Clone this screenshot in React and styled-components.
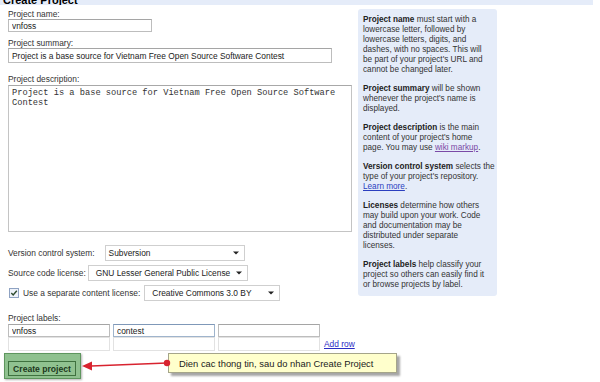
import React from 'react';
import styled, { createGlobalStyle } from 'styled-components';

const Global = createGlobalStyle`
  html, body { margin: 0; padding: 0; background: #fff; }
  body {
    font-family: "Liberation Sans", Arial, sans-serif;
    color: #333;
    width: 600px;
    height: 382px;
    overflow: hidden;
  }
`;

const Header = styled.div`
  width: 593px;
  height: 5px;
  background: #e5ecf9;
  overflow: hidden;
  padding-left: 3px;
  box-sizing: border-box;
`;

const Title = styled.h1`
  margin: -5px 0 0;
  font-size: 11px;
  line-height: 11px;
  font-weight: bold;
  color: #000;
`;

const Layout = styled.div`
  display: flex;
  align-items: flex-start;
  gap: 2px;
  padding: 4px 0 0 8px;
`;

const FormColumn = styled.div`
  width: 348px;
  display: flex;
  flex-direction: column;
`;

const Label = styled.div`
  font-size: 8.4px;
  line-height: 10px;
  color: #333;
  white-space: nowrap;
`;

const TextInput = styled.input`
  box-sizing: border-box;
  width: ${(p) => p.$w}px;
  height: ${(p) => p.$h || 14}px;
  margin: 0 0 ${(p) => p.$mb || 0}px;
  padding: 0 3px;
  border: 1px solid ${(p) => p.$border || '#bdbdbd'};
  border-top-color: ${(p) => p.$borderTop || '#a5a5a5'};
  background: #fff;
  font-family: "Liberation Sans", Arial, sans-serif;
  font-size: 8.4px;
  color: #222;
  outline: none;
`;

const DescArea = styled.textarea`
  box-sizing: border-box;
  width: 344px;
  height: 147px;
  margin: 1px 0 13px;
  padding: 2px 3px;
  border: 1px solid #c4c4c4;
  border-top-color: #a8a8a8;
  font-family: "Liberation Mono", "Courier New", monospace;
  font-size: 8.7px;
  line-height: 10px;
  color: #333;
  resize: none;
  overflow: hidden;
  outline: none;
`;

const OptionRow = styled.div`
  display: flex;
  align-items: center;
  gap: ${(p) => p.$gap}px;
  height: 16px;
  margin-bottom: ${(p) => p.$mb || 4}px;
`;

const Select = styled.div`
  box-sizing: border-box;
  width: ${(p) => p.$w}px;
  height: 16px;
  border: 1px solid #cfcfcf;
  background: #fff;
  display: flex;
  align-items: center;
  justify-content: space-between;
  padding: 0 5px 0 ${(p) => p.$pl || 5}px;
  font-size: 8.4px;
  color: #222;
  white-space: nowrap;
`;

const CheckBox = styled.span`
  display: inline-flex;
  width: 10px;
  height: 10px;
  margin-left: 1px;
`;

const LabelsRow = styled.div`
  display: flex;
  align-items: center;
  gap: 4px;
  margin-top: 1px;
`;

const LabelGrid = styled.div`
  display: grid;
  grid-template-columns: repeat(3, 102px);
  grid-template-rows: 13px 14px;
  column-gap: 3px;
`;

const AddRow = styled.a`
  align-self: flex-end;
  margin-bottom: 2px;
  font-size: 8.4px;
  line-height: 10px;
  color: #2b2bc4;
  text-decoration: underline;
  white-space: nowrap;
`;

const ActionRow = styled.div`
  position: relative;
  margin-top: 10px;
  display: flex;
`;

const Highlight = styled.div`
  position: absolute;
  left: -4px;
  top: -8px;
  width: 77px;
  height: 26px;
  box-sizing: border-box;
  background: #8fc18f;
  border: 1px solid #5e965e;
  box-shadow: 1px 1px 2px rgba(0, 0, 0, 0.3);
`;

const CreateButton = styled.button`
  position: relative;
  box-sizing: border-box;
  width: 68px;
  height: 15px;
  padding: 0;
  background: #90c290;
  border: 1px solid #3f713f;
  font-family: "Liberation Sans", Arial, sans-serif;
  font-size: 8.6px;
  font-weight: bold;
  color: #1c381c;
`;

const Callout = styled.div`
  position: absolute;
  left: 160px;
  top: -8px;
  width: 229px;
  height: 20px;
  box-sizing: border-box;
  background: #ffffcc;
  border: 1px solid #a5a58a;
  box-shadow: 3px 3px 2px rgba(0, 0, 0, 0.35);
  padding-left: 10px;
  display: flex;
  align-items: center;
  font-size: 9.4px;
  color: #222;
  white-space: nowrap;
`;

const Pointer = styled.svg`
  position: absolute;
  left: 72px;
  top: -8px;
  overflow: visible;
`;

const Panel = styled.div`
  width: 139px;
  box-sizing: border-box;
  background: #e5ecf9;
  border-radius: 3px;
  padding: 6px 2px 6px 5px;
  font-size: 8.2px;
  line-height: 10px;
  color: #333;
  white-space: nowrap;
`;

const Tip = styled.p`
  margin: 0 0 9px;
  &:last-child { margin-bottom: 0; }
  b { color: #222; }
`;

const Link = styled.a`
  color: ${(p) => (p.$visited ? '#7a4aa6' : '#2b3fbf')};
  text-decoration: underline;
`;

const Arrow = () => (
  <svg width="6" height="4" viewBox="0 0 6 4">
    <path d="M0 0.5 L6 0.5 L3 3.5 Z" fill="#222" />
  </svg>
);

export default function App() {
  return (
    <>
      <Global />
      <Header>
        <Title>Create Project</Title>
      </Header>
      <Layout>
        <FormColumn>
          <Label>Project name:</Label>
          <TextInput $w={144} $h={13} $mb={6} readOnly value="vnfoss" />
          <Label>Project summary:</Label>
          <TextInput
            $w={324}
            $h={15}
            $mb={11}
            readOnly
            value="Project is a base source for Vietnam Free Open Source Software Contest"
          />
          <Label>Project description:</Label>
          <DescArea
            readOnly
            value="Project is a base source for Vietnam Free Open Source Software Contest"
          />
          <OptionRow $gap={10}>
            <Label>Version control system:</Label>
            <Select $w={140} $pl={3}>
              Subversion <Arrow />
            </Select>
          </OptionRow>
          <OptionRow $gap={2}>
            <Label>Source code license:</Label>
            <Select $w={160} $pl={7}>
              GNU Lesser General Public License <Arrow />
            </Select>
          </OptionRow>
          <OptionRow $gap={4} $mb={12}>
            <CheckBox>
              <svg width="10" height="10" viewBox="0 0 10 10">
                <rect x="0.5" y="0.5" width="9" height="9" fill="#eef2fa" stroke="#8ea2c2" />
                <path d="M2.3 5 L4.2 7 L7.8 2.8" fill="none" stroke="#2d4a2d" strokeWidth="1.4" />
              </svg>
            </CheckBox>
            <Label>Use a separate content license:</Label>
            <Select $w={136} $pl={7}>
              Creative Commons 3.0 BY <Arrow />
            </Select>
          </OptionRow>
          <Label>Project labels:</Label>
          <LabelsRow>
            <LabelGrid>
              <TextInput $w={102} $h={13} readOnly value="vnfoss" />
              <TextInput $w={102} $h={13} $border="#9fb4cc" $borderTop="#7f98b8" readOnly value="contest" />
              <TextInput $w={102} $h={13} readOnly value="" />
              <TextInput $w={102} $h={14} $border="#e2e2e2" $borderTop="#e2e2e2" readOnly value="" />
              <TextInput $w={102} $h={14} $border="#e2e2e2" $borderTop="#e2e2e2" readOnly value="" />
              <TextInput $w={102} $h={14} $border="#e2e2e2" $borderTop="#e2e2e2" readOnly value="" />
            </LabelGrid>
            <AddRow href="#">Add row</AddRow>
          </LabelsRow>
          <ActionRow>
            <Highlight />
            <CreateButton>Create project</CreateButton>
            <Callout>Dien cac thong tin, sau do nhan Create Project</Callout>
            <Pointer width="92" height="20" viewBox="0 0 92 20">
              <line x1="11" y1="13" x2="87" y2="10" stroke="#d8232f" strokeWidth="1.3" />
              <path d="M2 13 L12 8.5 L12 17.5 Z" fill="#d8232f" />
              <circle cx="87" cy="10" r="3.2" fill="#d8232f" />
            </Pointer>
          </ActionRow>
        </FormColumn>
        <Panel>
          <Tip>
            <b>Project name</b> must start with a<br />
            lowercase letter, followed by<br />
            lowercase letters, digits, and<br />
            dashes, with no spaces. This will<br />
            be part of your project's URL and<br />
            cannot be changed later.
          </Tip>
          <Tip>
            <b>Project summary</b> will be shown<br />
            whenever the project's name is<br />
            displayed.
          </Tip>
          <Tip>
            <b>Project description</b> is the main<br />
            content of your project's home<br />
            page. You may use <Link $visited href="#">wiki markup</Link>.
          </Tip>
          <Tip>
            <b>Version control system</b> selects the<br />
            type of your project's repository.<br />
            <Link href="#">Learn more</Link>.
          </Tip>
          <Tip>
            <b>Licenses</b> determine how others<br />
            may build upon your work. Code<br />
            and documentation may be<br />
            distributed under separate<br />
            licenses.
          </Tip>
          <Tip>
            <b>Project labels</b> help classify your<br />
            project so others can easily find it<br />
            or browse projects by label.
          </Tip>
        </Panel>
      </Layout>
    </>
  );
}
